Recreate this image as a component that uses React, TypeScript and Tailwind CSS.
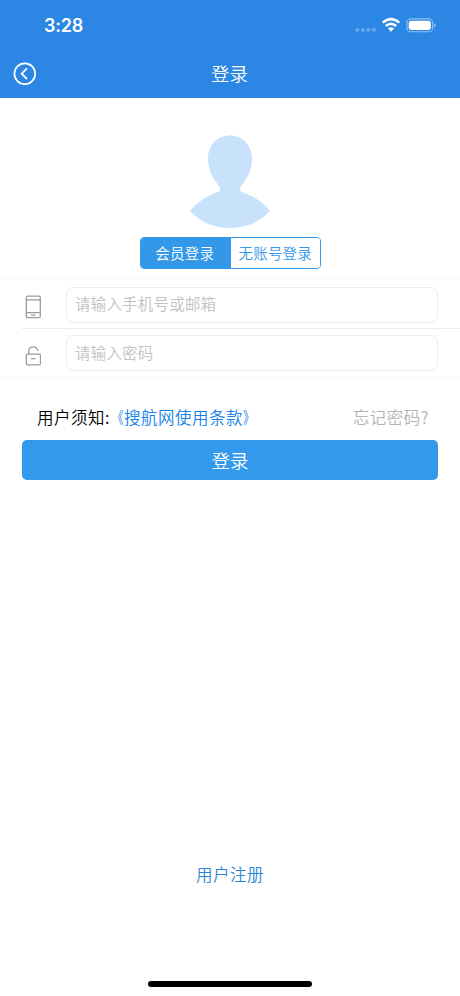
function StatusIcons() {
  return (
    <svg width="82" height="20" viewBox="0 0 82 20" fill="none">
      <g fill="#61a7ec">
        <rect x="1.4" y="13" width="3.8" height="3.8" rx="1.3" />
        <rect x="7" y="13" width="3.8" height="3.8" rx="1.3" />
        <rect x="12.5" y="13" width="3.8" height="3.8" rx="1.3" />
        <rect x="18.1" y="13" width="3.8" height="3.8" rx="1.3" />
      </g>
      <g stroke="#fff" strokeWidth="2.5">
        <path d="M28.7 7.6Q37 .7 45.3 7.6" />
        <path d="M31.8 11Q37 6.6 42.2 11" />
      </g>
      <path d="M34 13.4Q37 11.1 40 13.4L37 16.8Z" fill="#fff" />
      <rect x="52.9" y="3.9" width="25.8" height="12.9" rx="3.9" stroke="#8fc4f5" strokeWidth="1.1" />
      <rect x="54.7" y="5.7" width="22.2" height="9.3" rx="2.4" fill="#fff" />
      <path d="M80 8.2Q81.6 8.8 81.6 10.3T80 12.5Z" fill="#8fc4f5" />
    </svg>
  );
}

function BackIcon() {
  return (
    <svg width="24" height="24" viewBox="0 0 24 24" fill="none" stroke="#fff">
      <circle cx="11.8" cy="11.7" r="10.4" strokeWidth="1.7" />
      <path d="M13.9 6.4L8.7 11.7L13.9 17" strokeWidth="1.8" />
    </svg>
  );
}

function Avatar() {
  return (
    <svg width="82" height="94" viewBox="0 0 82 94" fill="#c9e2fb">
      <path d="M41 .5C53.5 .5 63 10 63 23.5C63 34 59 43 53 49.5Q50.5 52 51.5 56.5C64 60.5 74 67 81 76C71 87 57 93 41 93S11 87 1 76C8 67 18 60.5 30.5 56.5Q31.5 52 29 49.5C23 43 19 34 19 23.5C19 10 28.5 .5 41 .5Z" />
    </svg>
  );
}

function PhoneIcon() {
  return (
    <svg width="16" height="24" viewBox="0 0 16 24" fill="none" stroke="#9b9b9b" strokeWidth="1.3">
      <rect x="1.3" y="1.2" width="14" height="21.5" rx="1.4" />
      <path d="M1.2 4.9H15.2M1.2 17.7H15.2M6 20.2H10.6" />
    </svg>
  );
}

function LockIcon() {
  return (
    <svg width="16" height="20" viewBox="0 0 16 20" fill="none" stroke="#9b9b9b" strokeWidth="1.3">
      <rect x="1.3" y="8.2" width="14.2" height="10.6" rx="1.4" />
      <path d="M3.8 8V5.2C3.8 2.5 5.6.8 8.3.8C10.7.8 12.6 2.4 12.9 5M6.1 12.6H10.5" />
    </svg>
  );
}

const inputClass =
  "h-9 w-[372px] rounded-[7px] border border-[#ececec] bg-white pl-2 text-[15.5px] font-[350] tracking-[0.2px] text-[#555] outline-none placeholder:text-[#c2c2c2]";

export default function App() {
  return (
    <div className="flex h-[996px] w-[460px] flex-col bg-white font-['Noto_Sans_CJK_SC',sans-serif] font-[350]">
      <header className="h-[98px] bg-[#2b87e3] text-white">
        <div className="flex h-[49px] items-start justify-between pt-[15px] pr-6 pl-11">
          <span className="font-['Inter',sans-serif] text-[18px] leading-[22px] font-semibold tracking-[-0.2px]">3:28</span>
          <StatusIcons />
        </div>
        <div className="grid h-[49px] grid-cols-[48px_1fr_48px] items-center">
          <button className="ml-[13px]"><BackIcon /></button>
          <h1 className="-ml-px -mt-px text-center text-[18.5px] leading-[26px] font-[350]">登录</h1>
        </div>
      </header>

      <main className="flex flex-1 flex-col">
        <div className="mt-[37px] flex h-[94px] justify-center"><Avatar /></div>
        <div className="mt-2 ml-[140px] grid h-8 w-[181px] grid-cols-2 overflow-hidden rounded-[4px] border border-[#3598e8] text-[14.5px] leading-[28px] tracking-[0.2px]">
          <button className="bg-[#3398e8] pr-0.5 text-white">会员登录</button>
          <button className="bg-white whitespace-nowrap text-[#3598e8]">无账号登录</button>
        </div>

        <form className="mt-[9px] flex h-[100px] flex-col border-y border-y-[#f6f6f6]">
          <label className="flex h-[49px] items-start pt-[8px] pl-[25px]">
            <span className="mt-2 mr-[25px]"><PhoneIcon /></span>
            <input className={`${inputClass} pb-1`} placeholder="请输入手机号或邮箱" />
          </label>
          <div className="ml-[22px] h-px shrink-0 bg-[#ececec]" />
          <label className="flex h-[49px] items-start pt-[6px] pl-[25px]">
            <span className="mt-[11px] mr-[25px]"><LockIcon /></span>
            <input className={`${inputClass} pb-px`} type="password" placeholder="请输入密码" />
          </label>
        </form>

        <div className="mt-[27px] flex h-6 shrink-0 items-center justify-between pr-[31px] pl-[37px] text-[16.5px] leading-6 tracking-[0.5px]">
          <p className="flex text-black">
            用户须知:
            <a className="-ml-[3px] flex text-[#1482ea]">
              <span className="origin-right scale-x-70">《</span>搜航网使用条款<span className="origin-left scale-x-70">》</span>
            </a>
          </p>
          <a className="text-[#b3b3b3]">忘记密码?</a>
        </div>
        <button className="mx-[22px] mt-[11px] h-10 shrink-0 rounded-[5px] bg-[#3399ec] pt-0.5 text-[18.5px] text-white">登录</button>
        <a className="mt-[382px] text-center text-[16.5px] leading-6 tracking-[0.5px] text-[#2f84d8]">用户注册</a>
      </main>
      <div className="mx-auto mb-[9px] h-[6px] w-[164px] rounded-full bg-black" />
    </div>
  );
}
